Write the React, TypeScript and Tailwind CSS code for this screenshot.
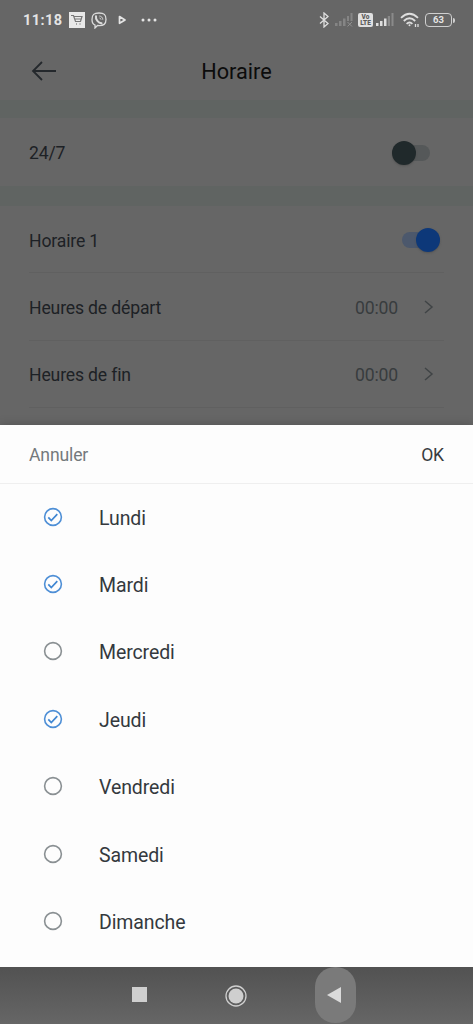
import { useState } from "react";

type Day = {
  name: string;
  checked: boolean;
};

const initialDays: Day[] = [
  { name: "Lundi", checked: true },
  { name: "Mardi", checked: true },
  { name: "Mercredi", checked: false },
  { name: "Jeudi", checked: true },
  { name: "Vendredi", checked: false },
  { name: "Samedi", checked: false },
  { name: "Dimanche", checked: false },
];

function StatusBar() {
  return (
    <div className="flex h-10 items-center pl-[23px] pr-[18px] text-[#e4e4e4]">
      <span className="w-[40px] whitespace-nowrap pt-px text-[14.5px] font-bold tracking-[0.4px]">11:18</span>
      {/* shop */}
      <svg className="ml-[6px]" width="16" height="16" viewBox="0 0 16 16" fill="none">
        <rect width="16" height="16" fill="#e8e8e8" />
        <path d="M2 3.500h2.500l2 6h5l1.500-5H5M6 7h6.500" stroke="#777" strokeWidth="1.200" />
        <path d="M7 12h1M10.500 12h1" stroke="#888" strokeWidth="1.400" />
      </svg>
      {/* viber */}
      <svg className="ml-[6px]" width="16" height="17" viewBox="0 0 16 17" fill="none" stroke="#dcdcdc">
        <path d="M8 1C3 1 1 2.500 1 7.500c0 3 .8 4.700 3 5.500v3l2.500-2.500C13 14 15 12 15 7.500 15 2.500 13 1 8 1z" strokeWidth="1.300" />
        <path d="M5 4.300C4.300 7.500 7.500 11 10.500 11.300" strokeWidth="2" strokeLinecap="round" />
        <path d="M8.300 4c2 .2 3.500 1.500 3.500 3.700M8.500 6c1 .2 1.400.8 1.500 1.600" strokeWidth=".9" />
      </svg>
      <svg className="ml-[11px]" width="9" height="10" viewBox="0 0 9 10" fill="none">
        <path d="M1.500 1.500L7 5l-5.500 3.300z" stroke="#e4e4e4" strokeWidth="1.700" strokeLinejoin="round" />
      </svg>
      <svg className="ml-[14px]" width="16" height="4" viewBox="0 0 16 4" fill="#e4e4e4">
        <circle cx="2" cy="2" r="1.500" />
        <circle cx="8" cy="2" r="1.500" />
        <circle cx="14" cy="2" r="1.500" />
      </svg>

      <div className="ml-auto flex items-center">
        <svg width="10" height="16" viewBox="0 0 10 16" fill="none" stroke="#dedede" strokeWidth="1.300">
          <path d="M1 4.500l8 7L5 15V1l4 3.500-8 7" />
        </svg>
        <svg className="ml-[6px]" width="18" height="14" viewBox="0 0 18 14" fill="#858585">
          <rect x="0" y="10" width="2.500" height="3" />
          <rect x="4" y="8" width="2.500" height="5" />
          <rect x="8" y="5.500" width="2.500" height="7.500" />
          <rect x="12" y="3" width="2" height="5" />
          <rect x="15.500" y="0" width="2" height="8" />
          <path d="M12.500 9l4.500 4.500M17 9l-4.500 4.500" stroke="#909090" />
        </svg>
        <div className="ml-[5px] flex h-[14px] w-[15px] flex-col items-center justify-center rounded-[2px] bg-[#e0e0e0] text-[6.500px] font-black leading-[6px] text-[#5c5c5c]">
          <span>Vo</span>
          <span>LTE</span>
        </div>
        <svg className="ml-[3px]" width="18" height="14" viewBox="0 0 18 14" fill="#dedede">
          <rect x="0" y="10" width="2.500" height="3" />
          <rect x="4" y="8" width="2.500" height="5" />
          <rect x="8" y="5.500" width="2.500" height="7.500" />
          <rect x="11.800" y="3" width="2.200" height="10" fill="#8a8a8a" />
          <rect x="15.500" y="0" width="2" height="13" fill="#8a8a8a" />
        </svg>
        <svg className="ml-[6px]" width="20" height="16" viewBox="0 0 20 16" fill="none" stroke="#dedede" strokeWidth="1.800">
          <path d="M1 5.800q8.500-8 17 0M3.800 9q5.700-5.500 11.400 0M6.600 11.800q2.900-2.700 5.800 0" />
          <circle cx="9.500" cy="13.300" r="1" fill="#dedede" stroke="none" />
          <path d="M15.500 12v3M18 12v3" strokeWidth="1.300" />
        </svg>
        <div className="ml-[5px] flex h-[14px] w-[27px] items-center justify-center rounded-[4px] border-[1.500px] border-[#cfcfcf] text-[9.500px] font-bold leading-none">
          63
        </div>
        <div className="ml-px h-[5px] w-[2px] rounded-r bg-[#cfcfcf]" />
      </div>
    </div>
  );
}

function TimeRow({ label, value }: { label: string; value: string }) {
  return (
    <div className="flex h-[67.400px] items-center border-b border-[#606060] pt-[3px] text-[17.600px] tracking-[-0.15px]">
      <span className="text-[#1d2125]">{label}</span>
      <span className="ml-auto text-[#383c3e]">{value}</span>
      <svg className="ml-[25px] mr-[10px] mb-[2px]" width="11" height="16" viewBox="0 0 11 16" fill="none">
        <path d="M2 2l7 6-7 6" stroke="#404446" strokeWidth="1.500" />
      </svg>
    </div>
  );
}

export default function App() {
  const [days, setDays] = useState<Day[]>(initialDays);

  const toggleDay = (name: string) => {
    setDays(days.map((day) => (day.name === name ? { ...day, checked: !day.checked } : day)));
  };

  return (
    <main className="flex h-[1024px] w-[473px] flex-col overflow-hidden bg-[#666] font-['Roboto',sans-serif]">
      <StatusBar />
      <header className="grid h-[60px] grid-cols-[1fr_auto_1fr] items-center px-[31px]">
        <svg width="26" height="22" viewBox="0 0 26 22" fill="none">
          <path d="M25 12H2M11 3l-9 9 9 9" stroke="#24282c" strokeWidth="1.800" />
        </svg>
        <h1 className="pt-[5px] text-[21.700px] text-[#0c0c0c]">Horaire</h1>
      </header>

      <div className="h-[18px] bg-[#606462]" />
      <section className="flex h-[68px] items-center justify-between pl-[29px] pr-[43px] pt-[2px] text-[17.600px] tracking-[-0.15px] text-[#1d2125]">
        <span className="pt-px">24/7</span>
        <div className="flex h-4 w-[38px] items-center rounded-full bg-[#555859]">
          <div className="h-6 w-6 shrink-0 rounded-full bg-[#20292b] shadow-[0_1px_2px_#4448]" />
        </div>
      </section>
      <div className="h-5 bg-[#606462]" />

      <section className="flex h-[219px] flex-col px-[29px]">
        <div className="flex h-[67.400px] items-center justify-between border-b border-[#606060] pr-1 pt-[2px] text-[17.600px] tracking-[-0.15px] text-[#1d2125]">
          <span className="pt-px">Horaire 1</span>
          <div className="flex h-4 w-[38px] items-center justify-end rounded-full bg-[#4c586c]">
            <div className="h-6 w-6 shrink-0 rounded-full bg-[#0d3879] shadow-[0_1px_2px_#4448]" />
          </div>
        </div>
        <TimeRow label="Heures de départ" value="00:00" />
        <TimeRow label="Heures de fin" value="00:00" />
      </section>

      <section className="h-[542px] bg-[#fdfdfd] shadow-[0_0_10px_rgba(0,0,0,0.2)]">
        <div className="flex h-[59px] items-center justify-between border-b border-[#efefef] px-[29px] pt-[2px] text-[17.600px] tracking-[-0.15px]">
          <button className="text-[#74797c]">Annuler</button>
          <button className="text-[#373c40]">OK</button>
        </div>
        <ul>
          {days.map((day) => (
            <li
              key={day.name}
              className="flex h-[67.400px] cursor-pointer items-center pl-[43px] text-[19.500px] tracking-[-0.1px] text-[#34393d]"
              onClick={() => toggleDay(day.name)}
            >
              <svg className="mb-[2px]" width="20" height="20" viewBox="0 0 20 20" fill="none">
                <circle cx="10" cy="10" r="8.400" stroke={day.checked ? "#4e8fd6" : "#8a9093"} strokeWidth="1.600" />
                {day.checked && <path d="M5.300 10.300l3 3.200 6-6.300" stroke="#3f86d2" strokeWidth="1.700" />}
              </svg>
              <span className="ml-9 pt-px">{day.name}</span>
            </li>
          ))}
        </ul>
      </section>

      <nav className="flex h-[57px] items-center bg-linear-to-b from-[#525252] to-[#666] pl-[132px]">
        <div className="mb-[2px] h-[15px] w-[15px] bg-[#cfcfcf]" />
        <svg className="ml-[78px]" width="22" height="22" viewBox="0 0 22 22" fill="none">
          <circle cx="11" cy="11" r="10" stroke="#cfcfcf" strokeWidth="1.300" />
          <circle cx="11" cy="11" r="7.500" fill="#cfcfcf" />
        </svg>
        <div className="mb-px ml-[68px] flex h-[56px] w-[41px] items-center justify-center rounded-[20px] bg-[#7a7a7a] pb-px pr-[3px]">
          <svg width="14" height="16" viewBox="0 0 14 16">
            <path d="M0 8L14 0v16z" fill="#dadada" />
          </svg>
        </div>
      </nav>
    </main>
  );
}
